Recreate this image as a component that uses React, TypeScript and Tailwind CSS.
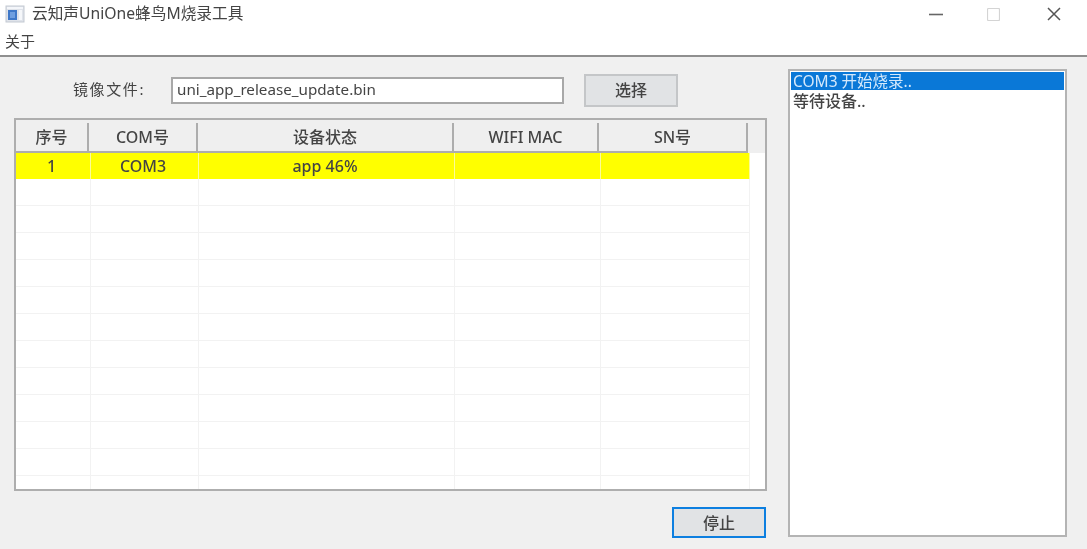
const font = { fontFamily: '"Noto Sans", "Noto Sans CJK SC", sans-serif' };

const columns = [
  { title: "序号", head: "w-[73px]", cell: "w-[75px]" },
  { title: "COM号", head: "w-[109px]", cell: "w-[108px]" },
  { title: "设备状态", head: "w-[256px]", cell: "w-[256px]" },
  { title: "WIFI MAC", head: "w-[145px]", cell: "w-[146px]" },
  { title: "SN号", head: "w-[149px]", cell: "w-[149px]" },
];

const firstRow = ["1", "COM3", "app 46%", "", ""];
const emptyRows = Array.from({ length: 12 }, (_, i) => i);

function AppIcon() {
  return (
    <svg width="20" height="18" viewBox="0 0 20 18" className="shrink-0">
      <rect x="1" y="1" width="18" height="16" fill="#dfe3ea" stroke="#c3c9d2" />
      <rect x="2" y="2" width="16" height="2" fill="#f4f6fa" />
      <rect x="3" y="5" width="9" height="10" fill="#3f78c8" />
      <rect x="5" y="7" width="5" height="6" fill="#6f9fe0" />
      <rect x="14" y="5" width="3" height="10" fill="#f5f7fa" />
    </svg>
  );
}

function WindowControls() {
  return (
    <div className="flex items-center">
      <svg width="14" height="12" viewBox="0 0 14 12" className="mr-[44px]">
        <path d="M0 6.5h14" stroke="#666666" strokeWidth="1.6" />
      </svg>
      <svg width="13" height="13" viewBox="0 0 13 13" className="mr-[47px]">
        <rect x="0.5" y="0.5" width="12" height="12" rx="1" fill="none" stroke="#d4d4d4" strokeWidth="1.2" />
      </svg>
      <svg width="14" height="14" viewBox="0 0 14 14" className="mr-[26px]">
        <path d="M1 1l12 12M13 1L1 13" stroke="#555555" strokeWidth="1.5" />
      </svg>
    </div>
  );
}

export default function App() {
  return (
    <div style={font} className="flex h-[549px] w-[1087px] flex-col overflow-hidden bg-[#f0f0f0] text-[16px] text-[#444444] blur-[0.4px]">
      <div className="flex h-[28px] items-center justify-between bg-white pl-[5px]">
        <div className="flex items-center gap-[7px]">
          <AppIcon />
          <span className="text-[15.7px] leading-none">云知声UniOne蜂鸟M烧录工具</span>
        </div>
        <WindowControls />
      </div>
      <div className="flex h-[27px] items-center bg-white pl-[5px] text-[15px] leading-none">关于</div>
      <div className="h-[2px] bg-[#8f8f8f]" />

      <div className="flex flex-1 pl-[14px]">
        <div className="flex w-[753px] flex-col">
          <div className="mt-[16px] flex h-[34px] items-center">
            <span className="ml-[59px] w-[98px] pb-[1px] text-[15px] tracking-[1.6px]">镜像文件:</span>
            <div className="flex h-[27px] w-[393px] items-center border-2 border-[#a8a8a8] bg-white pb-[2px] pl-[4px] text-[15.2px]">
              uni_app_release_update.bin
            </div>
            <button className="ml-[20px] h-[33px] w-[94px] border-2 border-[#c4c6c8] bg-[#e1e3e5] font-medium">
              选择
            </button>
          </div>

          <div className="mt-[11px] flex h-[373px] flex-col overflow-hidden border-2 border-[#aeaeae] bg-white">
            <div className="flex h-[33px] shrink-0 bg-[#efefef] pt-[3px]">
              {columns.map((col) => (
                <div
                  key={col.title}
                  className={`${col.head} flex items-center justify-center border-r-2 border-b-2 border-[#adadad] font-medium`}
                >
                  {col.title}
                </div>
              ))}
            </div>
            <div className="flex h-[26px] shrink-0">
              {firstRow.map((cell, i) => (
                <div
                  key={columns[i].title}
                  className={`${columns[i].cell} flex items-center justify-center border-r border-[#fbfb9a] bg-[#ffff00] pr-[3px] font-medium`}
                >
                  {cell}
                </div>
              ))}
            </div>
            {emptyRows.map((row) => (
              <div key={row} className="flex h-[27px] shrink-0">
                {columns.map((col) => (
                  <div key={col.title} className={`${col.cell} border-r border-b border-[#f2f2f2]`} />
                ))}
              </div>
            ))}
          </div>

          <div className="mt-[16px] flex justify-end pr-[1px]">
            <button className="h-[31px] w-[94px] border-2 border-[#0d7fe0] bg-[#e1e3e5] font-medium">
              停止
            </button>
          </div>
        </div>

        <div className="mt-[12px] ml-[21px] h-[468px] w-[279px] border-2 border-[#b4b4b4] bg-white p-[1px] leading-[18px]">
          <div className="h-[18px] bg-[#0a78d7] pl-[2px] text-[15.5px] text-[#d5e9fb]">COM3 开始烧录..</div>
          <div className="mt-[2px] pl-[2px] font-medium">等待设备..</div>
        </div>
      </div>
    </div>
  );
}
